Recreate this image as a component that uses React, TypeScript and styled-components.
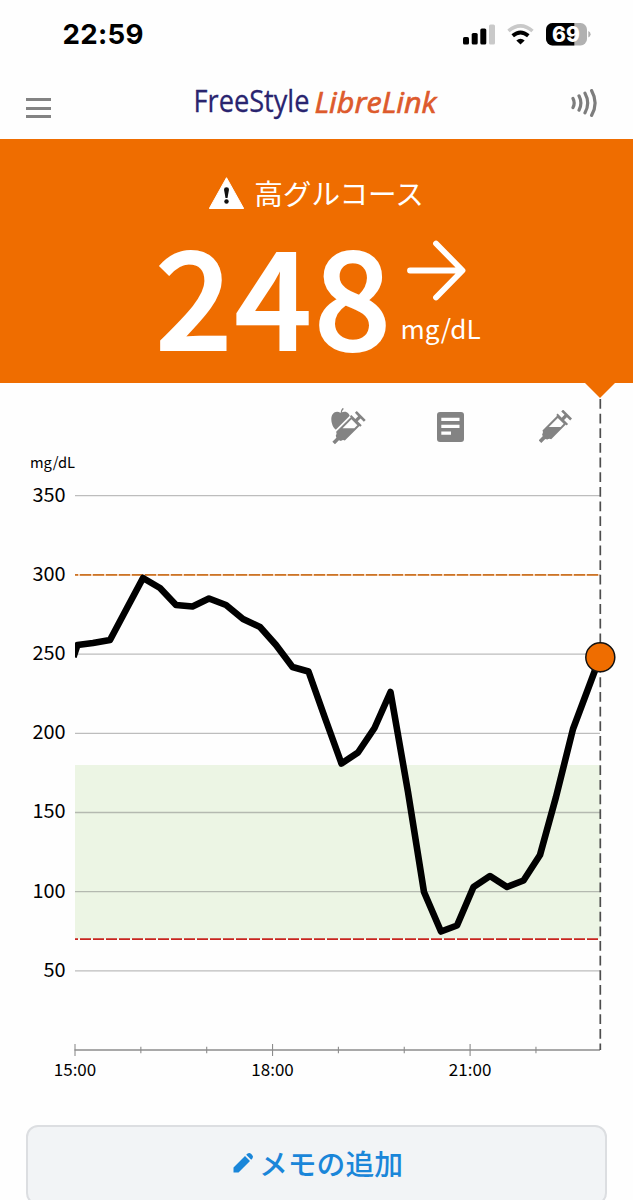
import React from "react";
import styled, { createGlobalStyle } from "styled-components";

const GlobalStyle = createGlobalStyle`
  body { margin: 0; background: #fefefe; }
  * { box-sizing: border-box; }
`;

const sans = `"Noto Sans CJK JP", "Noto Sans", sans-serif`;

const Screen = styled.main`
  width: 633px;
  height: 1200px;
  overflow: hidden;
  display: flex;
  flex-direction: column;
  background: #fefefe;
  font-family: ${sans};
  color: #111;
`;

const StatusBar = styled.div`
  height: 68px;
  flex: none;
  display: flex;
  align-items: center;
  justify-content: space-between;
  padding: 0 42px 0 62.5px;
`;

const Clock = styled.span`
  font: 700 27.7px/34px Inter, sans-serif;
  letter-spacing: 0.3px;
  color: #000;
`;

const StatusIcons = styled.div`
  display: flex;
  align-items: center;
  gap: 12px;
`;

const NavBar = styled.header`
  height: 71px;
  flex: none;
  display: flex;
  align-items: center;
  justify-content: space-between;
  padding: 0 35px 2px 26px;
`;

const MenuButton = styled.button`
  width: 25px;
  height: 20px;
  margin-top: 11px;
  padding: 0;
  border: 0;
  background: none;
  display: flex;
  flex-direction: column;
  justify-content: space-between;
`;

const MenuLine = styled.span`
  height: 3px;
  background: #838383;
`;

const Wordmark = styled.svg`
  margin-left: 14px;
`;

const Banner = styled.section`
  height: 243.5px;
  flex: none;
  position: relative;
  background: #ef6d00;
  color: #fff;
  display: flex;
  flex-direction: column;
  align-items: center;
`;

const Pointer = styled.i`
  position: absolute;
  left: 585px;
  top: 100%;
  border: 15.5px solid transparent;
  border-top-color: #ef6d00;
  border-bottom: 0;
`;

const AlertTitle = styled.h1`
  margin: 36px 0 0;
  height: 36px;
  display: flex;
  align-items: center;
  gap: 10px;
  font-size: 28.6px;
  line-height: 34px;
  font-weight: 400;
`;

const Reading = styled.div`
  display: flex;
  margin-left: 3px;
  margin-top: 26px;
`;

const Value = styled.strong`
  font-size: 135px;
  line-height: 108px;
  font-weight: 500;
  letter-spacing: 2.4px;
  -webkit-text-stroke: 2px #fff;
`;

const Trend = styled.div`
  display: flex;
  flex-direction: column;
  align-items: flex-start;
  margin-left: 14px;
  padding-top: 3px;
`;

const Unit = styled.span`
  font-size: 26.2px;
  line-height: 36px;
  margin-top: 9px;
  margin-left: -7px;
`;

const NoteRow = styled.div`
  height: 88.5px;
  flex: none;
  display: flex;
  align-items: center;
  padding: 0 60px 0 331px;
`;

const NoteIcon = styled.svg<{ $gap?: number }>`
  flex: none;
  margin-left: ${(p) => p.$gap ?? 0}px;
`;

const ChartSvg = styled.svg`
  display: block;
  flex: none;
  overflow: visible;
  font-family: ${sans};
`;

const AddNote = styled.button`
  flex: none;
  height: 80px;
  margin: 28px 26px 0;
  border: 2px solid #dcdee1;
  border-radius: 12px;
  background: #f2f4f6;
  color: #1a86d9;
  display: flex;
  align-items: center;
  justify-content: center;
  gap: 5px;
  padding: 0 0 5px 2px;
  font: 500 28.8px/36px ${sans};
`;

const Syringe = () => (
  <g transform="translate(3 95) rotate(-45)" fill="#838383">
    <path d="M0-5.5H17L20-11Q27-12 29-18.5H91V-22H97V-5H109V-19H117V19H109V5H97V22H91V18.5H29Q27 12 20 11L17 5.5H0Z" />
    <path d="M50-12.5H88V12.5H75Z" fill="#fefefe" />
  </g>
);

const readings: [number, number][] = [
  [73.5, 657], [77.5, 645], [93, 643], [110, 640], [127, 608], [143, 578], [160, 588],
  [176, 605], [192.5, 606.5], [209, 598.5], [226, 605], [243, 619], [260, 627],
  [276, 645], [292.5, 667], [308.5, 671.5], [325, 718], [341.5, 763.5], [358, 752.5],
  [374.5, 728], [390.5, 692], [408, 792], [424, 892], [441, 931.5], [457, 925.5],
  [473.5, 887], [490, 876], [507, 887], [523.5, 880.5], [540, 855], [556, 797],
  [573, 729], [600, 657],
];
const levels = [350, 300, 250, 200, 150, 100, 50];
const yOf = (v: number) => 1050.1 - v * 1.584;
const xOf = (hour: number) => 75 + (hour - 15) * 65.85;

const Chart = () => (
  <ChartSvg width="633" height="626" viewBox="0 471 633 626">
    <defs>
      <clipPath id="plot"><rect x="75" y="400" width="558" height="700" /></clipPath>
    </defs>
    <rect x="75" y={yOf(180)} width="525.5" height={yOf(70) - yOf(180)} fill="#ecf5e4" />
    <text x="30" y="468" fontSize="14.7">mg/dL</text>
    {levels.map((v) => (
      <React.Fragment key={v}>
        {v !== 300 && (
          <line x1="75" x2="600" y1={yOf(v)} y2={yOf(v)} stroke="#777" strokeOpacity=".48" strokeWidth="1.3" />
        )}
        <text x="65.5" y={yOf(v) + 5.8} textAnchor="end" fontSize="19.9">{v}</text>
      </React.Fragment>
    ))}
    <line x1="75" x2="600" y1={yOf(300)} y2={yOf(300)} stroke="#ef8a35" strokeOpacity=".45" strokeWidth="1.5" />
    <line x1="75" x2="600" y1={yOf(300)} y2={yOf(300)} stroke="#cb7427" strokeWidth="1.7" strokeDasharray="11 2" strokeDashoffset="8" />
    <line x1="75" x2="600" y1={yOf(70)} y2={yOf(70)} stroke="#c8241f" strokeWidth="1.7" strokeDasharray="11 2" strokeDashoffset="8" />
    <line x1="74.5" x2="600" y1="1050" y2="1050" stroke="#8c8c8c" strokeWidth="1.3" />
    {[15, 16, 17, 18, 19, 20, 21, 22].map((h) => {
      const r = h % 3 === 0 ? 6 : 3.3;
      return <line key={h} x1={xOf(h)} x2={xOf(h)} y1={1050 - r} y2={1050 + r} stroke="#8c8c8c" strokeWidth="1.1" />;
    })}
    {[15, 18, 21].map((h) => (
      <text key={h} x={xOf(h)} y="1076.3" textAnchor="middle" fontSize="17">{h}:00</text>
    ))}
    <line x1="600.3" x2="600.3" y1="399" y2="1050" stroke="#4d4d4d" strokeWidth="1.7" strokeDasharray="9.8 4.85" />
    <polyline
      clipPath="url(#plot)"
      points={readings.map((p) => p.join(",")).join(" ")}
      fill="none" stroke="#000" strokeWidth="6.6" strokeLinejoin="round"
    />
    <circle cx="600.3" cy="657.3" r="14.5" fill="#ef6d00" stroke="#111" strokeWidth="1.5" />
  </ChartSvg>
);

export default function App() {
  return (
    <Screen>
      <GlobalStyle />
      <StatusBar>
        <Clock>22:59</Clock>
        <StatusIcons>
          <svg width="32" height="21" viewBox="0 0 32 21">
            <rect x="0" y="13" width="6" height="7.5" rx="1.6" />
            <rect x="8.7" y="9" width="6" height="11.5" rx="1.6" />
            <rect x="17.3" y="4.5" width="6" height="16" rx="1.6" />
            <rect x="26" y="0.5" width="6" height="20" rx="1.6" fill="#c9c9c9" />
          </svg>
          <svg width="27" height="21" viewBox="0 0 27 21" fill="none">
            <path d="M1.5 7Q13.5-3.2 25.5 7" stroke="#c9c9c9" strokeWidth="3.6" />
            <path d="M5.7 11.8Q13.5 5 21.3 11.8" stroke="#000" strokeWidth="3.8" />
            <path d="M13.5 20.5L9.3 16.6Q13.5 12.8 17.7 16.6Z" fill="#000" />
          </svg>
          <svg width="45" height="23" viewBox="0 0 45 23">
            <defs><clipPath id="cell"><rect width="41" height="22.5" rx="6.5" /></clipPath></defs>
            <g clipPath="url(#cell)">
              <rect width="41" height="23" fill="#b1b1b1" />
              <rect width="28.3" height="23" />
            </g>
            <path d="M42.3 8Q44.6 9 44.6 11.3T42.3 14.6Z" fill="#b1b1b1" />
            <text x="20" y="18.6" textAnchor="middle" fill="#fff" fontFamily="Inter, sans-serif" fontWeight="800" fontSize="21">69</text>
          </svg>
        </StatusIcons>
      </StatusBar>

      <NavBar>
        <MenuButton aria-label="menu"><MenuLine /><MenuLine /><MenuLine /></MenuButton>
        <Wordmark width="256" height="46" viewBox="-5 -3 256 46" fontFamily="'Open Sans', sans-serif">
          <text x="-1.5" y="28.8" fontSize="31" fill="#29246f" stroke="#29246f" strokeWidth=".3" textLength="116" lengthAdjust="spacingAndGlyphs">FreeStyle</text>
          <text x="119.5" y="29.5" fontSize="30" fill="#dd5a2c" stroke="#dd5a2c" strokeWidth=".7" fontStyle="italic" fontWeight="400" textLength="122" lengthAdjust="spacingAndGlyphs">LibreLink</text>
        </Wordmark>
        <svg width="27" height="28" viewBox="0 0 27 28" fill="none" stroke="#7d7d7d" strokeWidth="3.2" strokeLinecap="round">
          <path d="M2 9.5Q4.4 14 2 18.5M8 6.8Q11.8 14 8 21.2M14 4.2Q19.4 14 14 23.8M20.6 1.6Q27.6 14 20.6 26.4" />
        </svg>
      </NavBar>

      <Banner>
        <AlertTitle>
          <svg width="35" height="32" viewBox="0 0 35 32">
            <path d="M17.5.7L34.7 31.5H.3Z" fill="#fff" stroke="#fff" strokeWidth="1" strokeLinejoin="round" />
            <path d="M15 12.5Q15 10.3 17.5 10.3T20 12.5L18.5 21H16.5Z" fill="#111" />
            <circle cx="17.5" cy="24.5" r="2.2" fill="#111" />
          </svg>
          高グルコース
        </AlertTitle>
        <Reading>
          <Value>248</Value>
          <Trend>
            <svg width="60" height="61" viewBox="0 0 60 61" fill="none" stroke="#fff" strokeWidth="5.8" strokeLinecap="round" strokeLinejoin="round">
              <path d="M3 30.5H55M29 3.5L55.5 30.5L29 57.5" />
            </svg>
            <Unit>mg/dL</Unit>
          </Trend>
        </Reading>
        <Pointer />
      </Banner>

      <NoteRow>
        <NoteIcon width="35" height="37" viewBox="0 0 105 111">
          <path d="M30 18Q30 6 37 1" stroke="#838383" strokeWidth="4" fill="none" />
          <path d="M29 15C15 6 0 15 1 36C2 52 11 67 21 68L58 32C56 11 42 7 29 15Z" fill="#838383" />
          <g transform="translate(5 10)">
            <path d="M5 66L68 3" stroke="#fefefe" strokeWidth="9" />
            <Syringe />
          </g>
        </NoteIcon>
        <NoteIcon $gap={71} width="27" height="30" viewBox="0 0 27 30">
          <rect width="27" height="30" rx="3" fill="#838383" />
          <path d="M4.3 5.8H22.5V9H4.3ZM4.3 12.8H22.5V16H4.3ZM4.3 19.5H14V22.7H4.3Z" fill="#fefefe" />
        </NoteIcon>
        <NoteIcon $gap={75} width="33" height="34" viewBox="0 0 99 102"><Syringe /></NoteIcon>
      </NoteRow>

      <Chart />

      <AddNote>
        <svg width="22" height="22" viewBox="0 0 22 22" fill="#1a86d9">
          <path d="M1.5 15.5L13 4L18 9L6.5 20.5H1.5ZM14.2 2.8L15.6 1.6Q17.3.2 19 1.8L20.2 3Q21.8 4.7 20.4 6.4L19.2 7.8Z" />
        </svg>
        メモの追加
      </AddNote>
    </Screen>
  );
}
